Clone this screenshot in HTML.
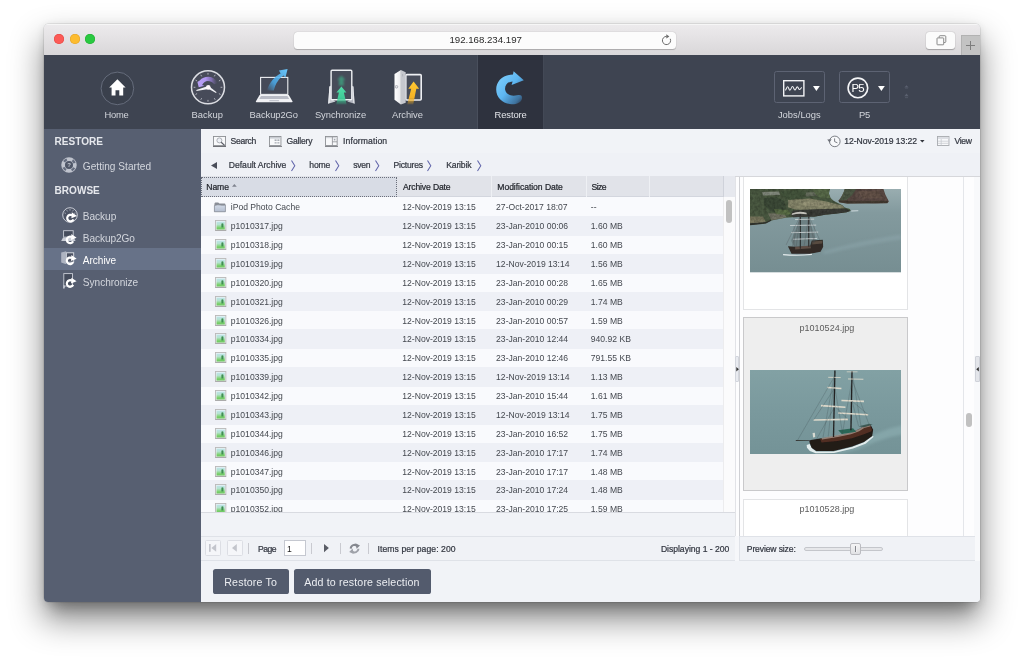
<!DOCTYPE html>
<html lang="en">
<head>
<meta charset="utf-8">
<title>P5 - Restore</title>
<style>
html,body{margin:0;padding:0;}
body{width:1024px;height:665px;overflow:hidden;background:#fff;position:relative;font-family:"Liberation Sans",sans-serif;}
#win{position:absolute;left:44px;top:24.4px;width:936px;height:577.6px;overflow:hidden;border-radius:4.5px 4.5px 4px 4px;
  box-shadow:0 17px 32px 2px rgba(0,0,0,.42),0 16px 14px -8px rgba(0,0,0,.22),0 2px 8px rgba(0,0,0,.11),0 0 0 .5px rgba(0,0,0,.14);background:#f1f3f7;}
#pg{will-change:transform;position:absolute;left:-44px;top:-24.4px;width:1024px;height:665px;}
.t{position:absolute;white-space:nowrap;line-height:1;font-family:"Liberation Sans",sans-serif;}
svg{overflow:visible;}
.th{-webkit-text-stroke:.22px currentColor;}

</style>
</head>
<body>
<div id="win"><div id="pg">
<div style="position:absolute;left:44.00px;top:24.00px;width:936.00px;height:31.00px;background:linear-gradient(#edebed,#e4e2e4 45%,#d9d7d9);border-bottom:0;box-shadow:inset 0 1px 0 #f6f6f6;"></div><div style="position:absolute;left:54.10px;top:34.10px;width:10.00px;height:10.00px;border-radius:50%;background:#fc5b57;box-shadow:inset 0 0 0 .5px #e1443f;"></div><div style="position:absolute;left:69.80px;top:34.10px;width:10.00px;height:10.00px;border-radius:50%;background:#fdbc2f;box-shadow:inset 0 0 0 .5px #e0a028;"></div><div style="position:absolute;left:85.30px;top:34.10px;width:10.00px;height:10.00px;border-radius:50%;background:#29c941;box-shadow:inset 0 0 0 .5px #1fac2e;"></div><div style="position:absolute;left:293.50px;top:31.50px;width:382.30px;height:17.20px;border-radius:3.5px;background:#fcfcfc;box-shadow:0 .5px .8px rgba(0,0,0,.2),0 0 0 .5px rgba(0,0,0,.05);"></div><span class="t" style="left:449.40px;top:30px;font-size:9.7px;line-height:19px;color:#2a2a2a;letter-spacing:-0.015px;">192.168.234.197</span><svg style="position:absolute;left:661.10px;top:35.30px;" width="11" height="11" viewBox="0 0 11 11"><path d="M9.22 3.77A4.1 4.1 0 1 1 5.50 1.40" fill="none" stroke="#6b6b6b" stroke-width="1"/><path d="M5.30 -0.80L8.40 1.40L5.30 3.60Z" fill="#6b6b6b"/></svg><div style="position:absolute;left:925.90px;top:31.80px;width:29.30px;height:17.40px;border-radius:3px;background:#fbfbfb;box-shadow:0 .5px 1px rgba(0,0,0,.25),0 0 0 .5px rgba(0,0,0,.05);"></div><svg style="position:absolute;left:935.50px;top:35.00px;" width="11" height="11" viewBox="0 0 11 11"><path d="M3.2 2.6V1.6A.9.9 0 0 1 4.1.7H8.9A.9.9 0 0 1 9.8 1.6V6.6A.9.9 0 0 1 8.9 7.5H8" fill="none" stroke="#6e6e6e" stroke-width=".8"/><rect x="1" y="2.9" width="6.7" height="6.9" rx=".6" fill="#fbfbfb" stroke="#6e6e6e" stroke-width=".8"/></svg><div style="position:absolute;left:961.00px;top:35.30px;width:19.00px;height:19.70px;background:#c3c3c3;border-left:.5px solid #b2b2b2;border-top:.5px solid #b2b2b2;"></div><div style="position:absolute;left:966.30px;top:44.90px;width:9.00px;height:0.90px;background:#7d7d7d;"></div><div style="position:absolute;left:970.40px;top:40.80px;width:0.90px;height:9.00px;background:#7d7d7d;"></div><div style="position:absolute;left:44.00px;top:55.00px;width:936.00px;height:74.00px;background:#3e4451;"></div><div style="position:absolute;left:478.00px;top:55.00px;width:65.00px;height:74.00px;background:#2e323e;"></div><div style="position:absolute;left:477.20px;top:55.00px;width:0.80px;height:74.00px;background:#494f5c;"></div><div style="position:absolute;left:543.00px;top:55.00px;width:1.00px;height:74.00px;background:#434956;"></div><svg style="position:absolute;left:100.00px;top:70.50px;" width="35" height="35" viewBox="0 0 35 35"><circle cx="17.4" cy="17.4" r="16.3" fill="#3a404c" stroke="#6a7080" stroke-width=".9"/><path d="M17.4 8.2L25.6 16.4H23.2V24.6H19.3V19.2H15.5V24.6H11.6V16.4H9.2Z" fill="#fff"/></svg><span class="t" style="left:104.40px;top:105px;font-size:9.4px;line-height:19px;color:#d3d6dc;letter-spacing:-0.219px;">Home</span><span class="t" style="left:191.50px;top:105px;font-size:9.4px;line-height:19px;color:#d3d6dc;letter-spacing:0.024px;">Backup</span><span class="t" style="left:249.60px;top:105px;font-size:9.4px;line-height:19px;color:#d3d6dc;letter-spacing:-0.069px;">Backup2Go</span><span class="t" style="left:314.90px;top:105px;font-size:9.4px;line-height:19px;color:#d3d6dc;letter-spacing:-0.039px;">Synchronize</span><span class="t" style="left:392.00px;top:105px;font-size:9.4px;line-height:19px;color:#d3d6dc;letter-spacing:-0.049px;">Archive</span><span class="t" style="left:494.50px;top:105px;font-size:9.4px;line-height:19px;color:#e4e6ea;letter-spacing:-0.088px;">Restore</span><span class="t" style="left:777.90px;top:105px;font-size:9.4px;line-height:19px;color:#d3d6dc;letter-spacing:0.017px;">Jobs/Logs</span><span class="t" style="left:859.10px;top:105px;font-size:9.4px;line-height:19px;color:#d3d6dc;letter-spacing:-0.349px;">P5</span><svg style="position:absolute;left:189.50px;top:69.20px;" width="36.2" height="36.2" viewBox="0 0 36.2 36.2"><defs><linearGradient id="pur" x1="1" y1="0" x2="0" y2="0"><stop offset="0" stop-color="#6a5f8e" stop-opacity="0"/><stop offset=".3" stop-color="#8f78c6" stop-opacity=".8"/><stop offset=".6" stop-color="#b096f0"/><stop offset="1" stop-color="#b9a2f6"/></linearGradient></defs><circle cx="18.0" cy="18.3" r="16.5" fill="#474b59" stroke="#dcdee3" stroke-width="1.5"/><g stroke="#b9bcc5" stroke-width=".9"><line x1="18.00" y1="3.90" x2="18.00" y2="5.70"/><line x1="25.20" y1="5.83" x2="24.30" y2="7.39"/><line x1="30.47" y1="11.10" x2="28.91" y2="12.00"/><line x1="32.40" y1="18.30" x2="30.60" y2="18.30"/><line x1="30.47" y1="25.50" x2="28.91" y2="24.60"/><line x1="25.20" y1="30.77" x2="24.30" y2="29.21"/><line x1="18.00" y1="32.70" x2="18.00" y2="30.90"/><line x1="10.80" y1="30.77" x2="11.70" y2="29.21"/><line x1="5.53" y1="25.50" x2="7.09" y2="24.60"/><line x1="3.60" y1="18.30" x2="5.40" y2="18.30"/><line x1="5.53" y1="11.10" x2="7.09" y2="12.00"/><line x1="10.80" y1="5.83" x2="11.70" y2="7.39"/></g><path d="M27.6 14Q24 7.5 18.4 7.7Q13 7.8 9.7 11.4L7.4 13L8.75 18.3L14.4 16.7L12.1 16Q14.5 12.2 17.7 12Q21.5 12 24.3 15.3Z" fill="url(#pur)"/><path d="M18.2 17.1L6.3 21.1L6.5 22L18.6 19.9Z" fill="#f2f3f6"/><path d="M17.4 19.2L26 24L26.6 23.2L19 17.2Z" fill="#f2f3f6"/><circle cx="18.3" cy="18.4" r="2.3" fill="#fdf6fa"/></svg><svg style="position:absolute;left:255.00px;top:66.00px;" width="40" height="40" viewBox="0 0 40 40"><defs><linearGradient id="blu" x1="0" y1="1" x2="1" y2="0"><stop offset="0" stop-color="#4aa9e8" stop-opacity="0"/><stop offset=".35" stop-color="#4aa9e8" stop-opacity=".85"/><stop offset="1" stop-color="#6cc7fb"/></linearGradient></defs><rect x="5.6" y="11.4" width="27.2" height="17" fill="#454a58" stroke="#eef0f3" stroke-width="1.1"/><path d="M4.6 28.9H33.8L37.6 35.4Q37.7 36.2 36.8 36.2H1.6Q.7 36.2 .8 35.4Z" fill="#f1f2f5"/><path d="M6 30H32.4L34.2 33H4.2Z" fill="#b9bcc6"/><path d="M14.6 34H23.8L24.2 35.3H14.2Z" fill="#c4c7cf"/><path d="M11.8 24.6C14.6 16 19.6 10.8 25.6 7.6L24 4.6L32.6 3L30.4 11.8L28.6 9.4C24 12.4 20.6 17 18.8 24.6Z" fill="url(#blu)"/></svg><svg style="position:absolute;left:326.00px;top:67.00px;" width="32" height="40" viewBox="0 0 32 40"><defs><linearGradient id="grn" x1="0" y1="0" x2="0" y2="1"><stop offset="0" stop-color="#52dba8"/><stop offset=".65" stop-color="#3ecb96"/><stop offset="1" stop-color="#3cc792" stop-opacity=".15"/></linearGradient><filter id="gb" x="-40%" y="-40%" width="180%" height="180%"><feGaussianBlur stdDeviation=".9"/></filter></defs><path d="M2.2 36.8L3.4 19.6L5.2 18.6V31.8L9.6 34.4Z" fill="#c9ccd3"/><path d="M2.2 36.8L3.4 19.6L4.2 19.2L3.6 35.8Z" fill="#eceef1"/><path d="M28.6 36.8L27.4 19.6L25.6 18.6V31.8L21.2 34.4Z" fill="#b4b7c0"/><path d="M28.6 36.8L27.4 19.6L26.6 19.2L27.2 35.8Z" fill="#e3e5e9"/><rect x="5.1" y="3.2" width="20.7" height="29.6" rx="1" fill="#474c59" stroke="#eef0f3" stroke-width="1.4"/><path d="M15.4 8.4L19.4 13H17.4L18 18.6H12.8L13.4 13H11.4Z" fill="#3cc792" opacity=".55" filter="url(#gb)"/><path d="M15.4 19.6L20.4 25.4H17.9L20.6 37.4H10.2L12.9 25.4H10.4Z" fill="url(#grn)"/></svg><svg style="position:absolute;left:390.00px;top:67.00px;" width="36" height="40" viewBox="0 0 36 40"><defs><linearGradient id="yel" x1="0" y1="0" x2="0" y2="1"><stop offset="0" stop-color="#ffc832"/><stop offset=".7" stop-color="#f6b224"/><stop offset="1" stop-color="#f5b021" stop-opacity=".12"/></linearGradient><linearGradient id="door" x1="0" y1="0" x2="1" y2="0"><stop offset="0" stop-color="#ffffff"/><stop offset="1" stop-color="#e9eaec"/></linearGradient></defs><rect x="15.8" y="7.6" width="15.4" height="25.4" rx="1" fill="#484d5a" stroke="#eef0f3" stroke-width="1.6"/><path d="M4.5 7.1L10.9 3V37.4L4.5 32.7Z" fill="url(#door)"/><path d="M10.9 3L15.7 5.3V35.8L10.9 37.4Z" fill="#c6c8ce"/><path d="M12.6 7V9.4" stroke="#a9acb4" stroke-width=".8"/><circle cx="6.5" cy="19.8" r="1.3" fill="#e9eaec" stroke="#9fa2ab" stroke-width=".8"/><path d="M23.6 14.4L29.2 21.8H26.3L23.2 37.6H17.2L21.2 21.8H18.3Z" fill="url(#yel)"/></svg><svg style="position:absolute;left:492.00px;top:68.00px;" width="36" height="40" viewBox="0 0 36 40"><defs><linearGradient id="rst" x1="0" y1="0" x2="1" y2="1"><stop offset="0" stop-color="#86d3fd"/><stop offset=".5" stop-color="#5db6f1"/><stop offset=".82" stop-color="#4b9fe0" stop-opacity=".6"/><stop offset="1" stop-color="#3f8fd0" stop-opacity="0"/></linearGradient></defs><path d="M21.6 3.2L31.8 12.2L19.6 17L20.6 13.4C15.2 13.6 12.4 18 13.2 22C14.2 26.6 19.4 28.6 25 27.2C29.4 26.2 30.2 28 30 30.4C29.6 34.4 24.4 36.4 19.6 36.2C10.8 35.8 4.2 29.6 4.2 21.4C4.2 13.4 10.6 6.6 21 6.6Z" fill="url(#rst)"/></svg><div style="position:absolute;left:774.10px;top:71.30px;width:50.60px;height:32.20px;border:.9px solid #5d6373;border-radius:2.5px;box-sizing:border-box;"></div><svg style="position:absolute;left:783.20px;top:79.60px;" width="21.6" height="16.6" viewBox="0 0 21.6 16.6"><rect x=".7" y=".7" width="20.2" height="15.2" fill="none" stroke="#f2f3f5" stroke-width="1.4"/><path d="M2.2 10.2C3.2 10 3.6 6.8 4.6 6.8C5.7 6.8 5.8 10.2 6.9 10.2C8 10.2 8.4 6.6 9.5 6.6C10.6 6.6 10.8 10 11.9 10C13 10 13.2 6.9 14.3 6.9C15.4 6.9 15.5 9.6 16.5 9.6C17.4 9.6 17.8 7.8 18.9 7.6" fill="none" stroke="#f2f3f5" stroke-width="1.05"/></svg><svg style="position:absolute;left:812.60px;top:85.70px;" width="6.8" height="5" viewBox="0 0 6.8 5"><path d="M0 0H6.8L3.4 5Z" fill="#fff"/></svg><div style="position:absolute;left:839.20px;top:71.30px;width:50.60px;height:32.20px;border:.9px solid #5d6373;border-radius:2.5px;box-sizing:border-box;"></div><svg style="position:absolute;left:847.40px;top:77.00px;" width="22" height="22" viewBox="0 0 22 22"><circle cx="10.9" cy="10.9" r="9.8" fill="none" stroke="#f4f5f7" stroke-width="1.6"/><text x="10.6" y="14.9" font-family="Liberation Sans, sans-serif" font-size="11.4" fill="#fff" text-anchor="middle" letter-spacing="-.9">P5</text></svg><svg style="position:absolute;left:877.80px;top:85.70px;" width="6.8" height="5" viewBox="0 0 6.8 5"><path d="M0 0H6.8L3.4 5Z" fill="#fff"/></svg><svg style="position:absolute;left:904.40px;top:84.60px;" width="5" height="14" viewBox="0 0 5 14"><path d="M.4 2.6H4.6L2.5 .2Z" fill="#5b6170"/><path d="M.4 11.2H4.6L2.5 8.6Z" fill="#5b6170"/><rect x="1" y="12.4" width="3" height=".7" fill="#5b6170"/><rect x="1" y="3.4" width="3" height=".5" fill="#535968"/></svg><div style="position:absolute;left:44.00px;top:129.00px;width:157.00px;height:473.00px;background:#575f71;"></div><div style="position:absolute;left:44.00px;top:248.20px;width:157.00px;height:21.90px;background:#677288;"></div><span class="t" style="left:54.60px;top:132px;font-size:10.05px;line-height:19px;color:#e6e8ed;letter-spacing:0.014px;font-weight:bold;">RESTORE</span><span class="t" style="left:54.60px;top:181px;font-size:10.05px;line-height:19px;color:#e6e8ed;font-weight:bold;">BROWSE</span><span class="t" style="left:82.80px;top:157px;font-size:10.1px;line-height:19px;color:#d3d6dd;letter-spacing:0.024px;">Getting Started</span><span class="t" style="left:82.80px;top:207px;font-size:10.1px;line-height:19px;color:#d3d6dd;letter-spacing:-0.031px;">Backup</span><span class="t" style="left:82.80px;top:229px;font-size:10.1px;line-height:19px;color:#d3d6dd;letter-spacing:-0.087px;">Backup2Go</span><span class="t" style="left:82.80px;top:251px;font-size:10.1px;line-height:19px;color:#ffffff;letter-spacing:-0.040px;">Archive</span><span class="t" style="left:82.80px;top:273px;font-size:10.1px;line-height:19px;color:#d3d6dd;letter-spacing:-0.016px;">Synchronize</span><svg style="position:absolute;left:60.00px;top:156.30px;" width="18" height="18" viewBox="0 0 18 18"><circle cx="9" cy="9" r="5.9" fill="none" stroke="#bfc3cd" stroke-width="3.7"/><circle cx="9" cy="9" r="5.9" fill="none" stroke="#646c7e" stroke-width="2.3" stroke-dasharray="3.4 5.87" stroke-dashoffset="-2.93"/><circle cx="9" cy="9" r="3.5" fill="#4f5667"/><text x="9" y="11.2" font-family="Liberation Sans, sans-serif" font-size="6" font-weight="bold" fill="#c3c7d0" text-anchor="middle">?</text></svg><svg style="position:absolute;left:61.60px;top:206.50px;" width="18" height="18" viewBox="0 0 18 18"><circle cx="8" cy="8" r="7.3" fill="#4c5364" stroke="#c9cdd6" stroke-width="1"/><g stroke="#c9cdd6" stroke-width=".7"><line x1="2.50" y1="5.86" x2="3.90" y2="6.41"/><line x1="4.67" y1="3.13" x2="5.52" y2="4.37"/><line x1="8.00" y1="2.10" x2="8.00" y2="3.60"/><line x1="11.33" y1="3.13" x2="10.48" y2="4.37"/><line x1="13.50" y1="5.86" x2="12.10" y2="6.41"/></g><g transform="translate(8.299999999999999,11.0) scale(.93)"><path d="M2 -2.9A3.5 3.5 0 1 0 3.4 1.5" fill="none" stroke="#fff" stroke-width="2.4" stroke-linecap="butt"/><path d="M1.6 -6.2L7.2 -2.2L1.2 0.2Z" fill="#fff"/></g></svg><svg style="position:absolute;left:60.00px;top:229.00px;" width="19" height="18" viewBox="0 0 19 18"><rect x="3.6" y="1.7" width="9.6" height="6.4" fill="#454c5c" stroke="#c9cdd6" stroke-width=".9"/><path d="M3 8.6H13.8L15.6 12H1.2Z" fill="#c9cdd6"/><g transform="translate(9.899999999999999,10.799999999999999) scale(.93)"><path d="M2 -2.9A3.5 3.5 0 1 0 3.4 1.5" fill="none" stroke="#fff" stroke-width="2.4" stroke-linecap="butt"/><path d="M1.6 -6.2L7.2 -2.2L1.2 0.2Z" fill="#fff"/></g></svg><svg style="position:absolute;left:60.00px;top:250.00px;" width="19" height="18" viewBox="0 0 19 18"><rect x="6.4" y="2.8" width="7.3" height="9.4" fill="#4a5162" stroke="#dfe2e8" stroke-width=".9"/><path d="M1.2 2.6L5.4 1.4Q6.3 1.2 6.3 2.1V13.4Q6.3 14.3 5.4 14L1.2 12.6Z" fill="#aeb4c1"/><g transform="translate(9.899999999999999,10.7) scale(.93)"><path d="M2 -2.9A3.5 3.5 0 1 0 3.4 1.5" fill="none" stroke="#fff" stroke-width="2.4" stroke-linecap="butt"/><path d="M1.6 -6.2L7.2 -2.2L1.2 0.2Z" fill="#fff"/></g></svg><svg style="position:absolute;left:60.00px;top:272.00px;" width="19" height="18" viewBox="0 0 19 18"><rect x="3.8" y="1.6" width="8.7" height="12.4" fill="#454c5c" stroke="#c9cdd6" stroke-width=".9"/><path d="M3.4 13L3 16.6H4.6L5 14Z" fill="#c9cdd6"/><g transform="translate(9.899999999999999,11.4) scale(.93)"><path d="M2 -2.9A3.5 3.5 0 1 0 3.4 1.5" fill="none" stroke="#fff" stroke-width="2.4" stroke-linecap="butt"/><path d="M1.6 -6.2L7.2 -2.2L1.2 0.2Z" fill="#fff"/></g></svg><div style="position:absolute;left:201.00px;top:129.00px;width:779.00px;height:24.90px;background:#f1f3f7;border-bottom:.8px solid #e6e8ee;box-sizing:border-box;"></div><div style="position:absolute;left:201.00px;top:153.40px;width:779.00px;height:23.10px;background:#eff1f6;"></div><svg style="position:absolute;left:212.90px;top:136.20px;" width="13" height="10" viewBox="0 0 13 10"><rect x=".45" y=".45" width="12.1" height="9.1" fill="#f8f9fb" stroke="#8d8f94" stroke-width=".9"/><circle cx="6.4" cy="4.4" r="2.5" fill="#eef1f6" stroke="#9b9ea6" stroke-width=".8"/><path d="M8.2 6.2L11.6 9.4" stroke="#5a5d66" stroke-width="1.2"/></svg><div style="position:absolute;left:212.90px;top:145.90px;width:13.00px;height:0.70px;background:#6f7177;"></div><span class="t th" style="left:230.60px;top:132px;font-size:8.6px;line-height:18px;color:#333741;letter-spacing:-0.325px;">Search</span><svg style="position:absolute;left:269.30px;top:136.20px;" width="12.4" height="10" viewBox="0 0 12.4 10"><rect x=".45" y=".45" width="11.5" height="9.1" fill="#f8f9fb" stroke="#8d8f94" stroke-width=".9"/><rect x="1" y="1" width="10.4" height="1.6" fill="#c9ccd2"/><rect x="5.6" y="3.4" width="2" height="1.6" fill="#a9adb5"/><rect x="8.4" y="3.4" width="2" height="1.6" fill="#a9adb5"/><rect x="5.6" y="6" width="2" height="1.6" fill="#b9bcc3"/><rect x="8.4" y="6" width="2" height="1.6" fill="#b9bcc3"/></svg><div style="position:absolute;left:269.30px;top:145.90px;width:12.40px;height:0.70px;background:#85878d;"></div><span class="t th" style="left:286.40px;top:132px;font-size:8.6px;line-height:18px;color:#333741;letter-spacing:-0.191px;">Gallery</span><svg style="position:absolute;left:325.30px;top:136.20px;" width="12.6" height="10" viewBox="0 0 12.6 10"><rect x=".45" y=".45" width="11.7" height="9.1" fill="#f8f9fb" stroke="#8d8f94" stroke-width=".9"/><rect x="1" y="1" width="10.6" height="1.2" fill="#d4d6db"/><path d="M7.4 1V9.4M7.4 5.8H12" stroke="#8d8f94" stroke-width=".8" fill="none"/><rect x="8.8" y="2.8" width="1.6" height="1.6" fill="#a3a7b0"/></svg><div style="position:absolute;left:325.30px;top:145.90px;width:12.60px;height:0.70px;background:#85878d;"></div><span class="t th" style="left:343.00px;top:132px;font-size:8.6px;line-height:18px;color:#333741;letter-spacing:0.107px;">Information</span><svg style="position:absolute;left:826.50px;top:134.60px;" width="14" height="13" viewBox="0 0 14 13"><circle cx="7.8" cy="6.4" r="5.3" fill="#f8f9fb" stroke="#6d7078" stroke-width=".9"/><path d="M7.6 3.4V6.6L10.4 7.8" fill="none" stroke="#6d7078" stroke-width=".9"/><path d="M.2 4.6L4.6 4.2L2.6 7.6Z" fill="#6d7078"/></svg><span class="t th" style="left:844.30px;top:132px;font-size:8.6px;line-height:18px;color:#333741;letter-spacing:-0.049px;">12-Nov-2019 13:22</span><svg style="position:absolute;left:920.40px;top:139.90px;" width="4.6" height="2.6" viewBox="0 0 4.6 2.6"><path d="M0 0H4.6L2.3 2.6Z" fill="#33363d"/></svg><svg style="position:absolute;left:936.70px;top:136.30px;" width="12.4" height="10" viewBox="0 0 12.4 10"><rect x=".45" y=".45" width="11.5" height="9.1" fill="#f8f9fb" stroke="#a7a9ae" stroke-width=".9"/><rect x="1" y="1" width="10.4" height="2" fill="#dcdee3"/><path d="M4.2 3V9.4M1 5.2H11.4M1 7.3H11.4" stroke="#c3c6cc" stroke-width=".7" fill="none"/></svg><span class="t th" style="left:954.40px;top:132px;font-size:8.6px;line-height:18px;color:#333741;letter-spacing:-0.296px;">View</span><svg style="position:absolute;left:210.70px;top:162.30px;" width="6" height="7" viewBox="0 0 6 7"><path d="M6 0V7L0 3.5Z" fill="#4a4e5a"/></svg><span class="t th" style="left:228.80px;top:156px;font-size:8.6px;line-height:18px;color:#333741;letter-spacing:-0.016px;">Default Archive</span><svg style="position:absolute;left:291.30px;top:159.60px;" width="4.4" height="11.4" viewBox="0 0 4.4 11.4"><path d="M.5 .4L3.8 5.7L.5 11" fill="none" stroke="#6165aa" stroke-width="1.05"/></svg><span class="t th" style="left:309.30px;top:156px;font-size:8.6px;line-height:18px;color:#333741;letter-spacing:-0.178px;">home</span><svg style="position:absolute;left:334.80px;top:159.60px;" width="4.4" height="11.4" viewBox="0 0 4.4 11.4"><path d="M.5 .4L3.8 5.7L.5 11" fill="none" stroke="#6165aa" stroke-width="1.05"/></svg><span class="t th" style="left:353.20px;top:156px;font-size:8.6px;line-height:18px;color:#333741;letter-spacing:-0.241px;">sven</span><svg style="position:absolute;left:375.00px;top:159.60px;" width="4.4" height="11.4" viewBox="0 0 4.4 11.4"><path d="M.5 .4L3.8 5.7L.5 11" fill="none" stroke="#6165aa" stroke-width="1.05"/></svg><span class="t th" style="left:393.60px;top:156px;font-size:8.6px;line-height:18px;color:#333741;letter-spacing:-0.233px;">Pictures</span><svg style="position:absolute;left:427.40px;top:159.60px;" width="4.4" height="11.4" viewBox="0 0 4.4 11.4"><path d="M.5 .4L3.8 5.7L.5 11" fill="none" stroke="#6165aa" stroke-width="1.05"/></svg><span class="t th" style="left:446.30px;top:156px;font-size:8.6px;line-height:18px;color:#333741;letter-spacing:-0.184px;">Karibik</span><svg style="position:absolute;left:476.60px;top:159.60px;" width="4.4" height="11.4" viewBox="0 0 4.4 11.4"><path d="M.5 .4L3.8 5.7L.5 11" fill="none" stroke="#6165aa" stroke-width="1.05"/></svg><svg width="0" height="0" style="position:absolute;left:0;top:0"><defs><linearGradient id="fld" x1="0" y1="0" x2="0" y2="1"><stop offset="0" stop-color="#d3dbe8"/><stop offset="1" stop-color="#b3bdcf"/></linearGradient><linearGradient id="pic" x1="0" y1="0" x2="0" y2="1"><stop offset="0" stop-color="#bfe3ee"/><stop offset=".4" stop-color="#b4e2cf"/><stop offset=".75" stop-color="#7fd273"/><stop offset="1" stop-color="#68c45c"/></linearGradient></defs></svg><div style="position:absolute;left:201.00px;top:176.20px;width:534.00px;height:21.10px;background:#e1e3e9;border-bottom:.7px solid #d3d6de;box-sizing:border-box;"></div><div style="position:absolute;left:722.60px;top:176.20px;width:12.40px;height:21.10px;background:#e6e8ee;border-left:.7px solid #cfd2da;box-sizing:border-box;"></div><div style="position:absolute;left:201.00px;top:176.90px;width:196.20px;height:19.70px;background:#d8dce5;border:.9px dotted #6b6f7b;box-sizing:border-box;"></div><div style="position:absolute;left:490.70px;top:176.20px;width:0.70px;height:21.10px;background:#cdd0d8;"></div><div style="position:absolute;left:491.40px;top:176.20px;width:0.80px;height:21.10px;background:#eef0f4;"></div><div style="position:absolute;left:585.50px;top:176.20px;width:0.70px;height:21.10px;background:#cdd0d8;"></div><div style="position:absolute;left:586.20px;top:176.20px;width:0.80px;height:21.10px;background:#eef0f4;"></div><div style="position:absolute;left:648.70px;top:176.20px;width:0.70px;height:21.10px;background:#cdd0d8;"></div><div style="position:absolute;left:649.40px;top:176.20px;width:0.80px;height:21.10px;background:#eef0f4;"></div><span class="t th" style="left:206.30px;top:178px;font-size:8.6px;line-height:18px;color:#22252c;letter-spacing:-0.085px;">Name</span><svg style="position:absolute;left:231.90px;top:184.00px;" width="4.8" height="2.7" viewBox="0 0 4.8 2.7"><path d="M0 2.7H4.8L2.4 0Z" fill="#7f838e"/></svg><span class="t th" style="left:403.00px;top:178px;font-size:8.6px;line-height:18px;color:#22252c;letter-spacing:-0.144px;">Archive Date</span><span class="t th" style="left:497.30px;top:178px;font-size:8.6px;line-height:18px;color:#22252c;letter-spacing:-0.050px;">Modification Date</span><span class="t th" style="left:591.50px;top:178px;font-size:8.6px;line-height:18px;color:#22252c;letter-spacing:-0.532px;">Size</span><div style="position:absolute;left:201.00px;top:197.00px;width:534.00px;height:315.50px;overflow:hidden;border-bottom:.8px solid #d9dce3;box-sizing:border-box;"><div style="position:absolute;left:0.00px;top:0.00px;width:534.00px;height:316.00px;background:#f9fafd;"></div><svg style="position:absolute;left:13.00px;top:4.90px;" width="11.8" height="10.2" viewBox="0 0 11.8 10.2"><path d="M.4 2.2Q.4 .5 1.4 .5H4.2L5.4 1.6H10.6Q11.4 1.6 11.4 2.4V9.8H.4Z" fill="#8a8e97"/><path d="M.4 3.6Q4 2.4 6 3Q9 3.6 11.4 3V9.8H.4Z" fill="url(#fld)" stroke="#80848d" stroke-width=".6"/></svg><span class="t" style="left:29.80px;top:1px;font-size:8.58px;line-height:18px;color:#44484f;">iPod Photo Cache</span><span class="t" style="left:201.30px;top:1px;font-size:8.58px;line-height:18px;color:#44484f;">12-Nov-2019 13:15</span><span class="t" style="left:295.10px;top:1px;font-size:8.58px;line-height:18px;color:#44484f;">27-Oct-2017 18:07</span><span class="t" style="left:389.80px;top:1px;font-size:8.58px;line-height:18px;color:#44484f;">--</span><div style="position:absolute;left:0.00px;top:19.07px;width:522.00px;height:19.77px;background:#eef0f6;"></div><svg style="position:absolute;left:13.50px;top:23.18px;" width="11.3" height="11" viewBox="0 0 11.3 11"><rect x=".45" y=".45" width="10.4" height="10.1" fill="#f1f1f1" stroke="#b9b9b9" stroke-width=".9"/><rect x=".2" y="9.9" width="10.9" height="1" fill="#a9a9a9"/><rect x="1.5" y="1.3" width="8.3" height="8.2" fill="url(#pic)"/><path d="M6.4 7.6V3.8Q7.4 2.6 8.4 3.8V7.6Z" fill="#3f8f52"/><rect x="1.5" y="1.3" width="8.3" height=".7" fill="#e9f5f6" opacity=".8"/></svg><span class="t" style="left:29.80px;top:20px;font-size:8.58px;line-height:18px;color:#44484f;">p1010317.jpg</span><span class="t" style="left:201.30px;top:20px;font-size:8.58px;line-height:18px;color:#44484f;">12-Nov-2019 13:15</span><span class="t" style="left:295.10px;top:20px;font-size:8.58px;line-height:18px;color:#44484f;">23-Jan-2010 00:06</span><span class="t" style="left:389.80px;top:20px;font-size:8.58px;line-height:18px;color:#44484f;">1.60 MB</span><svg style="position:absolute;left:13.50px;top:42.05px;" width="11.3" height="11" viewBox="0 0 11.3 11"><rect x=".45" y=".45" width="10.4" height="10.1" fill="#f1f1f1" stroke="#b9b9b9" stroke-width=".9"/><rect x=".2" y="9.9" width="10.9" height="1" fill="#a9a9a9"/><rect x="1.5" y="1.3" width="8.3" height="8.2" fill="url(#pic)"/><path d="M6.4 7.6V3.8Q7.4 2.6 8.4 3.8V7.6Z" fill="#3f8f52"/><rect x="1.5" y="1.3" width="8.3" height=".7" fill="#e9f5f6" opacity=".8"/></svg><span class="t" style="left:29.80px;top:39px;font-size:8.58px;line-height:18px;color:#44484f;">p1010318.jpg</span><span class="t" style="left:201.30px;top:39px;font-size:8.58px;line-height:18px;color:#44484f;">12-Nov-2019 13:15</span><span class="t" style="left:295.10px;top:39px;font-size:8.58px;line-height:18px;color:#44484f;">23-Jan-2010 00:15</span><span class="t" style="left:389.80px;top:39px;font-size:8.58px;line-height:18px;color:#44484f;">1.60 MB</span><div style="position:absolute;left:0.00px;top:56.83px;width:522.00px;height:19.77px;background:#eef0f6;"></div><svg style="position:absolute;left:13.50px;top:60.92px;" width="11.3" height="11" viewBox="0 0 11.3 11"><rect x=".45" y=".45" width="10.4" height="10.1" fill="#f1f1f1" stroke="#b9b9b9" stroke-width=".9"/><rect x=".2" y="9.9" width="10.9" height="1" fill="#a9a9a9"/><rect x="1.5" y="1.3" width="8.3" height="8.2" fill="url(#pic)"/><path d="M6.4 7.6V3.8Q7.4 2.6 8.4 3.8V7.6Z" fill="#3f8f52"/><rect x="1.5" y="1.3" width="8.3" height=".7" fill="#e9f5f6" opacity=".8"/></svg><span class="t" style="left:29.80px;top:58px;font-size:8.58px;line-height:18px;color:#44484f;">p1010319.jpg</span><span class="t" style="left:201.30px;top:58px;font-size:8.58px;line-height:18px;color:#44484f;">12-Nov-2019 13:15</span><span class="t" style="left:295.10px;top:58px;font-size:8.58px;line-height:18px;color:#44484f;">12-Nov-2019 13:14</span><span class="t" style="left:389.80px;top:58px;font-size:8.58px;line-height:18px;color:#44484f;">1.56 MB</span><svg style="position:absolute;left:13.50px;top:79.80px;" width="11.3" height="11" viewBox="0 0 11.3 11"><rect x=".45" y=".45" width="10.4" height="10.1" fill="#f1f1f1" stroke="#b9b9b9" stroke-width=".9"/><rect x=".2" y="9.9" width="10.9" height="1" fill="#a9a9a9"/><rect x="1.5" y="1.3" width="8.3" height="8.2" fill="url(#pic)"/><path d="M6.4 7.6V3.8Q7.4 2.6 8.4 3.8V7.6Z" fill="#3f8f52"/><rect x="1.5" y="1.3" width="8.3" height=".7" fill="#e9f5f6" opacity=".8"/></svg><span class="t" style="left:29.80px;top:77px;font-size:8.58px;line-height:18px;color:#44484f;">p1010320.jpg</span><span class="t" style="left:201.30px;top:77px;font-size:8.58px;line-height:18px;color:#44484f;">12-Nov-2019 13:15</span><span class="t" style="left:295.10px;top:77px;font-size:8.58px;line-height:18px;color:#44484f;">23-Jan-2010 00:28</span><span class="t" style="left:389.80px;top:77px;font-size:8.58px;line-height:18px;color:#44484f;">1.65 MB</span><div style="position:absolute;left:0.00px;top:94.58px;width:522.00px;height:19.77px;background:#eef0f6;"></div><svg style="position:absolute;left:13.50px;top:98.67px;" width="11.3" height="11" viewBox="0 0 11.3 11"><rect x=".45" y=".45" width="10.4" height="10.1" fill="#f1f1f1" stroke="#b9b9b9" stroke-width=".9"/><rect x=".2" y="9.9" width="10.9" height="1" fill="#a9a9a9"/><rect x="1.5" y="1.3" width="8.3" height="8.2" fill="url(#pic)"/><path d="M6.4 7.6V3.8Q7.4 2.6 8.4 3.8V7.6Z" fill="#3f8f52"/><rect x="1.5" y="1.3" width="8.3" height=".7" fill="#e9f5f6" opacity=".8"/></svg><span class="t" style="left:29.80px;top:96px;font-size:8.58px;line-height:18px;color:#44484f;">p1010321.jpg</span><span class="t" style="left:201.30px;top:96px;font-size:8.58px;line-height:18px;color:#44484f;">12-Nov-2019 13:15</span><span class="t" style="left:295.10px;top:96px;font-size:8.58px;line-height:18px;color:#44484f;">23-Jan-2010 00:29</span><span class="t" style="left:389.80px;top:96px;font-size:8.58px;line-height:18px;color:#44484f;">1.74 MB</span><svg style="position:absolute;left:13.50px;top:117.55px;" width="11.3" height="11" viewBox="0 0 11.3 11"><rect x=".45" y=".45" width="10.4" height="10.1" fill="#f1f1f1" stroke="#b9b9b9" stroke-width=".9"/><rect x=".2" y="9.9" width="10.9" height="1" fill="#a9a9a9"/><rect x="1.5" y="1.3" width="8.3" height="8.2" fill="url(#pic)"/><path d="M6.4 7.6V3.8Q7.4 2.6 8.4 3.8V7.6Z" fill="#3f8f52"/><rect x="1.5" y="1.3" width="8.3" height=".7" fill="#e9f5f6" opacity=".8"/></svg><span class="t" style="left:29.80px;top:115px;font-size:8.58px;line-height:18px;color:#44484f;">p1010326.jpg</span><span class="t" style="left:201.30px;top:115px;font-size:8.58px;line-height:18px;color:#44484f;">12-Nov-2019 13:15</span><span class="t" style="left:295.10px;top:115px;font-size:8.58px;line-height:18px;color:#44484f;">23-Jan-2010 00:57</span><span class="t" style="left:389.80px;top:115px;font-size:8.58px;line-height:18px;color:#44484f;">1.59 MB</span><div style="position:absolute;left:0.00px;top:132.32px;width:522.00px;height:19.77px;background:#eef0f6;"></div><svg style="position:absolute;left:13.50px;top:136.43px;" width="11.3" height="11" viewBox="0 0 11.3 11"><rect x=".45" y=".45" width="10.4" height="10.1" fill="#f1f1f1" stroke="#b9b9b9" stroke-width=".9"/><rect x=".2" y="9.9" width="10.9" height="1" fill="#a9a9a9"/><rect x="1.5" y="1.3" width="8.3" height="8.2" fill="url(#pic)"/><path d="M6.4 7.6V3.8Q7.4 2.6 8.4 3.8V7.6Z" fill="#3f8f52"/><rect x="1.5" y="1.3" width="8.3" height=".7" fill="#e9f5f6" opacity=".8"/></svg><span class="t" style="left:29.80px;top:133px;font-size:8.58px;line-height:18px;color:#44484f;">p1010334.jpg</span><span class="t" style="left:201.30px;top:133px;font-size:8.58px;line-height:18px;color:#44484f;">12-Nov-2019 13:15</span><span class="t" style="left:295.10px;top:133px;font-size:8.58px;line-height:18px;color:#44484f;">23-Jan-2010 12:44</span><span class="t" style="left:389.80px;top:133px;font-size:8.58px;line-height:18px;color:#44484f;">940.92 KB</span><svg style="position:absolute;left:13.50px;top:155.30px;" width="11.3" height="11" viewBox="0 0 11.3 11"><rect x=".45" y=".45" width="10.4" height="10.1" fill="#f1f1f1" stroke="#b9b9b9" stroke-width=".9"/><rect x=".2" y="9.9" width="10.9" height="1" fill="#a9a9a9"/><rect x="1.5" y="1.3" width="8.3" height="8.2" fill="url(#pic)"/><path d="M6.4 7.6V3.8Q7.4 2.6 8.4 3.8V7.6Z" fill="#3f8f52"/><rect x="1.5" y="1.3" width="8.3" height=".7" fill="#e9f5f6" opacity=".8"/></svg><span class="t" style="left:29.80px;top:152px;font-size:8.58px;line-height:18px;color:#44484f;">p1010335.jpg</span><span class="t" style="left:201.30px;top:152px;font-size:8.58px;line-height:18px;color:#44484f;">12-Nov-2019 13:15</span><span class="t" style="left:295.10px;top:152px;font-size:8.58px;line-height:18px;color:#44484f;">23-Jan-2010 12:46</span><span class="t" style="left:389.80px;top:152px;font-size:8.58px;line-height:18px;color:#44484f;">791.55 KB</span><div style="position:absolute;left:0.00px;top:170.07px;width:522.00px;height:19.77px;background:#eef0f6;"></div><svg style="position:absolute;left:13.50px;top:174.18px;" width="11.3" height="11" viewBox="0 0 11.3 11"><rect x=".45" y=".45" width="10.4" height="10.1" fill="#f1f1f1" stroke="#b9b9b9" stroke-width=".9"/><rect x=".2" y="9.9" width="10.9" height="1" fill="#a9a9a9"/><rect x="1.5" y="1.3" width="8.3" height="8.2" fill="url(#pic)"/><path d="M6.4 7.6V3.8Q7.4 2.6 8.4 3.8V7.6Z" fill="#3f8f52"/><rect x="1.5" y="1.3" width="8.3" height=".7" fill="#e9f5f6" opacity=".8"/></svg><span class="t" style="left:29.80px;top:171px;font-size:8.58px;line-height:18px;color:#44484f;">p1010339.jpg</span><span class="t" style="left:201.30px;top:171px;font-size:8.58px;line-height:18px;color:#44484f;">12-Nov-2019 13:15</span><span class="t" style="left:295.10px;top:171px;font-size:8.58px;line-height:18px;color:#44484f;">12-Nov-2019 13:14</span><span class="t" style="left:389.80px;top:171px;font-size:8.58px;line-height:18px;color:#44484f;">1.13 MB</span><svg style="position:absolute;left:13.50px;top:193.05px;" width="11.3" height="11" viewBox="0 0 11.3 11"><rect x=".45" y=".45" width="10.4" height="10.1" fill="#f1f1f1" stroke="#b9b9b9" stroke-width=".9"/><rect x=".2" y="9.9" width="10.9" height="1" fill="#a9a9a9"/><rect x="1.5" y="1.3" width="8.3" height="8.2" fill="url(#pic)"/><path d="M6.4 7.6V3.8Q7.4 2.6 8.4 3.8V7.6Z" fill="#3f8f52"/><rect x="1.5" y="1.3" width="8.3" height=".7" fill="#e9f5f6" opacity=".8"/></svg><span class="t" style="left:29.80px;top:190px;font-size:8.58px;line-height:18px;color:#44484f;">p1010342.jpg</span><span class="t" style="left:201.30px;top:190px;font-size:8.58px;line-height:18px;color:#44484f;">12-Nov-2019 13:15</span><span class="t" style="left:295.10px;top:190px;font-size:8.58px;line-height:18px;color:#44484f;">23-Jan-2010 15:44</span><span class="t" style="left:389.80px;top:190px;font-size:8.58px;line-height:18px;color:#44484f;">1.61 MB</span><div style="position:absolute;left:0.00px;top:207.82px;width:522.00px;height:19.77px;background:#eef0f6;"></div><svg style="position:absolute;left:13.50px;top:211.93px;" width="11.3" height="11" viewBox="0 0 11.3 11"><rect x=".45" y=".45" width="10.4" height="10.1" fill="#f1f1f1" stroke="#b9b9b9" stroke-width=".9"/><rect x=".2" y="9.9" width="10.9" height="1" fill="#a9a9a9"/><rect x="1.5" y="1.3" width="8.3" height="8.2" fill="url(#pic)"/><path d="M6.4 7.6V3.8Q7.4 2.6 8.4 3.8V7.6Z" fill="#3f8f52"/><rect x="1.5" y="1.3" width="8.3" height=".7" fill="#e9f5f6" opacity=".8"/></svg><span class="t" style="left:29.80px;top:209px;font-size:8.58px;line-height:18px;color:#44484f;">p1010343.jpg</span><span class="t" style="left:201.30px;top:209px;font-size:8.58px;line-height:18px;color:#44484f;">12-Nov-2019 13:15</span><span class="t" style="left:295.10px;top:209px;font-size:8.58px;line-height:18px;color:#44484f;">12-Nov-2019 13:14</span><span class="t" style="left:389.80px;top:209px;font-size:8.58px;line-height:18px;color:#44484f;">1.75 MB</span><svg style="position:absolute;left:13.50px;top:230.80px;" width="11.3" height="11" viewBox="0 0 11.3 11"><rect x=".45" y=".45" width="10.4" height="10.1" fill="#f1f1f1" stroke="#b9b9b9" stroke-width=".9"/><rect x=".2" y="9.9" width="10.9" height="1" fill="#a9a9a9"/><rect x="1.5" y="1.3" width="8.3" height="8.2" fill="url(#pic)"/><path d="M6.4 7.6V3.8Q7.4 2.6 8.4 3.8V7.6Z" fill="#3f8f52"/><rect x="1.5" y="1.3" width="8.3" height=".7" fill="#e9f5f6" opacity=".8"/></svg><span class="t" style="left:29.80px;top:228px;font-size:8.58px;line-height:18px;color:#44484f;">p1010344.jpg</span><span class="t" style="left:201.30px;top:228px;font-size:8.58px;line-height:18px;color:#44484f;">12-Nov-2019 13:15</span><span class="t" style="left:295.10px;top:228px;font-size:8.58px;line-height:18px;color:#44484f;">23-Jan-2010 16:52</span><span class="t" style="left:389.80px;top:228px;font-size:8.58px;line-height:18px;color:#44484f;">1.75 MB</span><div style="position:absolute;left:0.00px;top:245.57px;width:522.00px;height:19.77px;background:#eef0f6;"></div><svg style="position:absolute;left:13.50px;top:249.68px;" width="11.3" height="11" viewBox="0 0 11.3 11"><rect x=".45" y=".45" width="10.4" height="10.1" fill="#f1f1f1" stroke="#b9b9b9" stroke-width=".9"/><rect x=".2" y="9.9" width="10.9" height="1" fill="#a9a9a9"/><rect x="1.5" y="1.3" width="8.3" height="8.2" fill="url(#pic)"/><path d="M6.4 7.6V3.8Q7.4 2.6 8.4 3.8V7.6Z" fill="#3f8f52"/><rect x="1.5" y="1.3" width="8.3" height=".7" fill="#e9f5f6" opacity=".8"/></svg><span class="t" style="left:29.80px;top:247px;font-size:8.58px;line-height:18px;color:#44484f;">p1010346.jpg</span><span class="t" style="left:201.30px;top:247px;font-size:8.58px;line-height:18px;color:#44484f;">12-Nov-2019 13:15</span><span class="t" style="left:295.10px;top:247px;font-size:8.58px;line-height:18px;color:#44484f;">23-Jan-2010 17:17</span><span class="t" style="left:389.80px;top:247px;font-size:8.58px;line-height:18px;color:#44484f;">1.74 MB</span><svg style="position:absolute;left:13.50px;top:268.55px;" width="11.3" height="11" viewBox="0 0 11.3 11"><rect x=".45" y=".45" width="10.4" height="10.1" fill="#f1f1f1" stroke="#b9b9b9" stroke-width=".9"/><rect x=".2" y="9.9" width="10.9" height="1" fill="#a9a9a9"/><rect x="1.5" y="1.3" width="8.3" height="8.2" fill="url(#pic)"/><path d="M6.4 7.6V3.8Q7.4 2.6 8.4 3.8V7.6Z" fill="#3f8f52"/><rect x="1.5" y="1.3" width="8.3" height=".7" fill="#e9f5f6" opacity=".8"/></svg><span class="t" style="left:29.80px;top:266px;font-size:8.58px;line-height:18px;color:#44484f;">p1010347.jpg</span><span class="t" style="left:201.30px;top:266px;font-size:8.58px;line-height:18px;color:#44484f;">12-Nov-2019 13:15</span><span class="t" style="left:295.10px;top:266px;font-size:8.58px;line-height:18px;color:#44484f;">23-Jan-2010 17:17</span><span class="t" style="left:389.80px;top:266px;font-size:8.58px;line-height:18px;color:#44484f;">1.48 MB</span><div style="position:absolute;left:0.00px;top:283.32px;width:522.00px;height:19.77px;background:#eef0f6;"></div><svg style="position:absolute;left:13.50px;top:287.43px;" width="11.3" height="11" viewBox="0 0 11.3 11"><rect x=".45" y=".45" width="10.4" height="10.1" fill="#f1f1f1" stroke="#b9b9b9" stroke-width=".9"/><rect x=".2" y="9.9" width="10.9" height="1" fill="#a9a9a9"/><rect x="1.5" y="1.3" width="8.3" height="8.2" fill="url(#pic)"/><path d="M6.4 7.6V3.8Q7.4 2.6 8.4 3.8V7.6Z" fill="#3f8f52"/><rect x="1.5" y="1.3" width="8.3" height=".7" fill="#e9f5f6" opacity=".8"/></svg><span class="t" style="left:29.80px;top:284px;font-size:8.58px;line-height:18px;color:#44484f;">p1010350.jpg</span><span class="t" style="left:201.30px;top:284px;font-size:8.58px;line-height:18px;color:#44484f;">12-Nov-2019 13:15</span><span class="t" style="left:295.10px;top:284px;font-size:8.58px;line-height:18px;color:#44484f;">23-Jan-2010 17:24</span><span class="t" style="left:389.80px;top:284px;font-size:8.58px;line-height:18px;color:#44484f;">1.48 MB</span><svg style="position:absolute;left:13.50px;top:306.30px;" width="11.3" height="11" viewBox="0 0 11.3 11"><rect x=".45" y=".45" width="10.4" height="10.1" fill="#f1f1f1" stroke="#b9b9b9" stroke-width=".9"/><rect x=".2" y="9.9" width="10.9" height="1" fill="#a9a9a9"/><rect x="1.5" y="1.3" width="8.3" height="8.2" fill="url(#pic)"/><path d="M6.4 7.6V3.8Q7.4 2.6 8.4 3.8V7.6Z" fill="#3f8f52"/><rect x="1.5" y="1.3" width="8.3" height=".7" fill="#e9f5f6" opacity=".8"/></svg><span class="t" style="left:29.80px;top:303px;font-size:8.58px;line-height:18px;color:#44484f;">p1010352.jpg</span><span class="t" style="left:201.30px;top:303px;font-size:8.58px;line-height:18px;color:#44484f;">12-Nov-2019 13:15</span><span class="t" style="left:295.10px;top:303px;font-size:8.58px;line-height:18px;color:#44484f;">23-Jan-2010 17:25</span><span class="t" style="left:389.80px;top:303px;font-size:8.58px;line-height:18px;color:#44484f;">1.59 MB</span><div style="position:absolute;left:522.00px;top:0.00px;width:12.00px;height:315.00px;background:#fbfbfc;border-left:.6px solid #ececee;box-sizing:border-box;"></div><div style="position:absolute;left:525.10px;top:3.00px;width:5.90px;height:22.90px;background:#c1c1c1;border-radius:3px;"></div></div><div style="position:absolute;left:735.00px;top:176.50px;width:245.00px;height:359.50px;background:#fdfdfe;"></div><div style="position:absolute;left:734.50px;top:176.50px;width:0.70px;height:359.50px;background:#e2e3e7;"></div><div style="position:absolute;left:739.30px;top:176.50px;width:0.80px;height:359.50px;background:#cfd0d4;"></div><div style="position:absolute;left:962.80px;top:176.50px;width:0.70px;height:359.50px;background:#e4e6ea;"></div><div style="position:absolute;left:973.60px;top:176.50px;width:0.70px;height:359.50px;background:#e4e6ea;"></div><div style="position:absolute;left:974.30px;top:176.50px;width:5.70px;height:359.50px;background:#f8f9fb;"></div><div style="position:absolute;left:735.00px;top:176.20px;width:245.00px;height:0.80px;background:#d6d7db;"></div><div style="position:absolute;left:739.00px;top:176.50px;width:224.00px;height:359.30px;overflow:hidden;"><div style="position:absolute;left:4.30px;top:-26.50px;width:164.90px;height:159.90px;background:#fff;border:.8px solid #e3e4e6;box-sizing:border-box;"></div><svg preserveAspectRatio="none" style="position:absolute;left:11.40px;top:12.50px;" width="151" height="83.6" viewBox="0 0 150.6 83.8"><defs><linearGradient id="w1" x1="0" y1="0" x2="0" y2="1"><stop offset="0" stop-color="#99adb0"/><stop offset=".28" stop-color="#839a9e"/><stop offset="1" stop-color="#768e92"/></linearGradient><filter id="b1" x="-10%" y="-10%" width="120%" height="120%"><feGaussianBlur stdDeviation=".75"/></filter><filter id="b2" x="-10%" y="-30%" width="120%" height="160%"><feGaussianBlur stdDeviation="1.6"/></filter><filter id="b3" x="-20%" y="-20%" width="140%" height="140%"><feGaussianBlur stdDeviation=".35"/></filter><filter id="nz" x="0" y="0" width="100%" height="100%"><feTurbulence type="fractalNoise" baseFrequency=".35" numOctaves="2" seed="7" result="n"/><feColorMatrix in="n" type="matrix" values="0 0 0 0 0  0 0 0 0 0  0 0 0 0 0  .9 .9 .9 0 -1.05"/><feComposite in2="SourceGraphic" operator="in"/></filter><clipPath id="c1"><rect x="0" y="0" width="150.6" height="83.8"/></clipPath><clipPath id="ci"><polygon points="0,0 79.8,0 78.7,4.6 80.4,8.9 83.6,12.1 92.2,16.4 94.3,18.5 99.7,20.1 100.4,21.9 96.5,23.2 85.7,24.6 75,25.7 64.2,27.5 58,27.5 41.7,28.2 35.2,28.9 21.3,31.6 15.9,34.3 8,35.2 0,36"/><polygon points="94.4,0 133.1,0 134.8,5.3 138.5,12.6 137.1,14.1 123.4,14.4 111.1,13.9 97,14 89.1,13.2 88.2,11.8 91.2,7.6 93.6,3"/></clipPath></defs><g clip-path="url(#c1)"><rect width="150.6" height="83.8" fill="url(#w1)"/><path d="M72 62.5C95 56 120 50 151 45.5V50.5C120 54.5 98 60 74 65.5Z" fill="#93acb2" opacity=".42" filter="url(#b2)"/><path d="M101 21.4L108 21V22.4L101 22.8Z" fill="#c9d6d9" opacity=".8" filter="url(#b3)"/><g filter="url(#b1)"><polygon points="0,0 79.8,0 78.7,4.6 80.4,8.9 83.6,12.1 92.2,16.4 94.3,18.5 99.7,20.1 100.4,21.9 96.5,23.2 85.7,24.6 75,25.7 64.2,27.5 58,27.5 41.7,28.2 35.2,28.9 21.3,31.6 15.9,34.3 8,35.2 0,36" fill="#4c5a42"/><path d="M38 11L60 9.4L76 12.6L92 16.6L94.4 19.6L75 20.2L58 21L45 20.6L38 18.4Z" fill="#88886c"/><path d="M52 13L72 13.4L82 16.4L70 17.6L54 16.6Z" fill="#9a977a" opacity=".8"/><path d="M43 21.6L58 20.6L75 20L94.6 19.6L100.4 21.9L96.5 23.4L85.7 24.8L75 25.9L64.2 27.7L58 27.7L43 28.4L41 25Z" fill="#3b3d37"/><path d="M12 3L29 2.4L30 6L13 6.6Z" fill="#8d9387" opacity=".85"/><path d="M55 3.4L68 3L69 6.6L56 7.4Z" fill="#767b6d" opacity=".7"/><path d="M14 9L26 8L34 12L36 20L30 24L20 22L14 16Z" fill="#3c4c37"/><path d="M30 2L52 .4L56 4L52 9L40 10.6L32 8Z" fill="#45573c"/><path d="M62 .4L79 0L78.6 5L80 9L72 9.6L66 6Z" fill="#586a49"/><path d="M0 27.6L13 27.6L16 33.8L8 35.2L0 36Z" fill="#7b7a60"/><path d="M18 24.6L34 24L36.4 28.6L21.4 31.4Z" fill="#7c7b6c" opacity=".85"/><path d="M24 20L38 21L41 25L36 26L26 25Z" fill="#5d7148" opacity=".9"/><path d="M0 34.4L8 33.8L16 33L21 30.6L21.3 31.8L15.9 34.6L8 35.6L0 36.4Z" fill="#33362f"/><polygon points="94.4,0 133.1,0 134.8,5.3 138.5,12.6 137.1,14.1 123.4,14.4 111.1,13.9 97,14 89.1,13.2 88.2,11.8 91.2,7.6 93.6,3" fill="#5b4c45"/><path d="M94.6 0L106 0L102 6L96 11L88.6 12.4L91.6 7.6Z" fill="#4c5a45" opacity=".9"/><path d="M108 2L128 1.6L132 9L112 10Z" fill="#6a564d" opacity=".7"/><path d="M88.4 11.6L110 12.2L137.6 12.2L137.1 14.3L97 14.8L89 13.4Z" fill="#453b32"/></g><g clip-path="url(#ci)"><rect x="0" y="0" width="140" height="37" fill="#1f261c" filter="url(#nz)" opacity=".3"/></g><path d="M41.6 26.4Q48.6 22 56.4 25L56.4 27.4H41.6Z" fill="#3a3b38" filter="url(#b3)"/><path d="M41.8 24.6Q48.8 21.6 56.4 23.8L56.6 25.4Q49 23.8 41.6 26Z" fill="#c3c1bb" filter="url(#b3)"/><g filter="url(#b3)"><path d="M37.8 57.4L46 58L60 56.8L61.6 51.6L72.6 50.8L73 58L70.4 62.8L60 64.8L41.4 65Z" fill="#302a26"/><path d="M45 57.8L60 56.6L61 59.4L45 60.6Z" fill="#6e5b50" opacity=".75"/><path d="M62 52.6L72 52V54.6L62 55.6Z" fill="#6a5a4c" opacity=".7"/><path d="M50.2 28L58.6 28L66 52L60 57L44 58L41 52Z" fill="#3a3f40" opacity=".28"/><g stroke="#2b2a2a" stroke-width="1.1"><line x1="50.2" y1="25" x2="50.2" y2="60"/><line x1="58.6" y1="25" x2="58.6" y2="58"/></g><g stroke="#d3d9da" stroke-width=".9" opacity=".9"><line x1="40" y1="36.6" x2="66" y2="36.2"/><line x1="41" y1="43.8" x2="68" y2="43.2"/><line x1="43" y1="50.4" x2="67" y2="49.6"/><line x1="45" y1="30.6" x2="64" y2="30.2"/></g><g stroke="#4a4d4f" stroke-width=".4" opacity=".7"><line x1="50.2" y1="27" x2="42" y2="58"/><line x1="50.2" y1="27" x2="46" y2="58"/><line x1="58.6" y1="27" x2="54" y2="57"/><line x1="58.6" y1="27" x2="64" y2="54"/><line x1="58.6" y1="27" x2="70" y2="52"/><line x1="50.2" y1="27" x2="36" y2="56"/><line x1="44" y1="37" x2="44" y2="58"/><line x1="64" y1="37" x2="64" y2="54"/></g><path d="M33 65.2Q48 66.6 62 65L61.6 66.2Q46 67.6 33 66.4Z" fill="#e4ebed"/></g></g></svg><div style="position:absolute;left:4.30px;top:140.70px;width:164.90px;height:174.20px;background:#eeeeee;border:.8px solid #c9c9cb;box-sizing:border-box;"></div><span class="t" style="left:60.45px;top:142px;font-size:9.0px;line-height:18px;color:#5c5c5c;letter-spacing:0.029px;">p1010524.jpg</span><svg preserveAspectRatio="none" style="position:absolute;left:11.40px;top:193.70px;" width="151" height="84" viewBox="0 0 150.8 83.5"><defs><linearGradient id="w2" x1="0" y1="0" x2="0" y2="1"><stop offset="0" stop-color="#82a1a4"/><stop offset=".5" stop-color="#7a999d"/><stop offset="1" stop-color="#749397"/></linearGradient><clipPath id="c2"><rect x="0" y="0" width="150.8" height="83.5"/></clipPath></defs><g clip-path="url(#c2)"><rect width="150.8" height="83.5" fill="url(#w2)"/><polygon points="113.8,71.9 124.4,63.9 140.2,58.0 153.5,54.7 153.5,63.9 140.2,66.6 124.4,71.9 108.5,78.5 92.6,82.5 83.4,82.5" fill="#93b5b8" opacity=".5" filter="url(#b2)"/><g filter="url(#b3)"><polygon points="56.6,74.5 59.5,73.5 62.2,78.0 66.2,81.1 83.4,81.1 101.9,76.6 113.8,71.9 122.4,65.5 123.6,66.3 115.4,73.2 102.9,78.0 83.9,82.5 65.6,82.7 59.8,80.6 56.9,77.2" fill="#e3eded"/><polygon points="45.7,69.6 59.5,70.0 60.9,69.6 72.8,67.6 87.3,65.0 100.5,62.4 108.5,59.0 113.8,55.7 120.4,54.4 123.0,59.3 122.0,65.5 113.8,71.5 101.9,76.1 83.4,80.6 66.2,80.6 61.5,77.4 59.5,72.1 59.3,70.7 45.8,70.4" fill="#221a17"/><polygon points="70.1,68.7 87.3,65.8 100.5,63.1 109.1,59.7 114.0,56.8 119.9,55.5 121.7,58.9 121.4,60.8 113.8,63.9 101.9,67.9 87.3,70.6 71.4,72.1" fill="#5e3325" opacity=".8"/><polygon points="71.4,67.6 87.3,64.7 100.5,62.1 108.5,58.9 113.8,55.7 120.1,54.4 120.7,56.0 114.0,57.6 109.0,60.8 100.8,63.9 87.6,66.6 72.0,69.2" fill="#b8a69c" opacity=".7"/><polygon points="88.1,60.0 102.9,57.9 106.1,61.3 91.6,63.5" fill="#2a6656"/><polygon points="108.5,56.0 119.1,53.4 122.4,54.4 113.8,56.8" fill="#2f4f48" opacity=".8"/><polygon points="62.5,62.6 64.8,62.4 65.1,66.6 63.0,67.1" fill="#e8e6dc" opacity=".85"/><g stroke="#232323" stroke-width="1.35"><line x1="84.8" y1="0.4" x2="83.4" y2="66.6"/><line x1="101.9" y1="1.0" x2="100.8" y2="60.0"/></g><line x1="78.1" y1="7.3" x2="90.6" y2="7.5" stroke="#ddd9cb" stroke-width="0.8"/><line x1="77.3" y1="17.4" x2="91.3" y2="18.4" stroke="#ddd9cb" stroke-width="1.7"/><line x1="70.9" y1="35.4" x2="95.3" y2="37.0" stroke="#ddd9cb" stroke-width="1.6"/><line x1="63.5" y1="49.7" x2="97.9" y2="49.1" stroke="#ddd9cb" stroke-width="1.6"/><line x1="96.6" y1="1.8" x2="107.4" y2="1.8" stroke="#ddd9cb" stroke-width="0.7"/><line x1="97.9" y1="8.9" x2="113.2" y2="9.2" stroke="#ddd9cb" stroke-width="0.9"/><line x1="91.3" y1="30.3" x2="113.8" y2="31.1" stroke="#ddd9cb" stroke-width="1.7"/><line x1="88.1" y1="42.8" x2="118.0" y2="44.4" stroke="#ddd9cb" stroke-width="1.5"/><line x1="84.8" y1="1.8" x2="72.8" y2="67.6" stroke="#39484a" stroke-width=".35" opacity=".7"/><line x1="84.8" y1="1.8" x2="78.1" y2="66.6" stroke="#39484a" stroke-width=".35" opacity=".7"/><line x1="84.8" y1="17.6" x2="92.6" y2="63.9" stroke="#39484a" stroke-width=".35" opacity=".7"/><line x1="101.9" y1="1.8" x2="111.1" y2="57.3" stroke="#39484a" stroke-width=".35" opacity=".7"/><line x1="101.9" y1="9.7" x2="119.1" y2="54.7" stroke="#39484a" stroke-width=".35" opacity=".7"/><line x1="101.9" y1="9.7" x2="92.6" y2="61.3" stroke="#39484a" stroke-width=".35" opacity=".7"/><line x1="84.8" y1="36.2" x2="66.2" y2="69.2" stroke="#39484a" stroke-width=".35" opacity=".7"/><line x1="84.8" y1="5.7" x2="47.6" y2="69.6" stroke="#39484a" stroke-width=".35" opacity=".7"/><line x1="101.9" y1="30.9" x2="108.5" y2="56.0" stroke="#39484a" stroke-width=".35" opacity=".7"/><line x1="84.8" y1="17.6" x2="63.5" y2="49.7" stroke="#39484a" stroke-width=".35" opacity=".7"/><line x1="84.8" y1="36.2" x2="97.9" y2="49.1" stroke="#39484a" stroke-width=".35" opacity=".7"/><line x1="101.9" y1="30.9" x2="118.0" y2="44.4" stroke="#39484a" stroke-width=".35" opacity=".7"/></g></g></svg><div style="position:absolute;left:4.30px;top:322.10px;width:164.90px;height:174.20px;background:#fff;border:.8px solid #e3e4e6;box-sizing:border-box;"></div><span class="t" style="left:60.45px;top:323px;font-size:9.0px;line-height:18px;color:#5c5c5c;letter-spacing:0.029px;">p1010528.jpg</span></div><div style="position:absolute;left:966.20px;top:413.30px;width:5.60px;height:13.60px;background:#c1c1c1;border-radius:3px;"></div><div style="position:absolute;left:735.00px;top:356.00px;width:4.40px;height:26.00px;background:#e9ebf0;border:.6px solid #d3d6dd;box-sizing:border-box;border-radius:1px;"></div><svg style="position:absolute;left:736.00px;top:366.70px;" width="3" height="4.6" viewBox="0 0 3 4.6"><path d="M.3 0L2.9 2.3L.3 4.6Z" fill="#333"/></svg><div style="position:absolute;left:975.00px;top:356.40px;width:5.00px;height:26.00px;background:#e3e5ea;border:.6px solid #cfd2d9;box-sizing:border-box;border-radius:1px;"></div><svg style="position:absolute;left:976.20px;top:367.10px;" width="3" height="4.6" viewBox="0 0 3 4.6"><path d="M2.8 0L.2 2.3L2.8 4.6Z" fill="#333"/></svg><div style="position:absolute;left:201.00px;top:512.00px;width:534.00px;height:24.20px;background:#f1f3f7;"></div><div style="position:absolute;left:201.00px;top:511.60px;width:534.00px;height:0.80px;background:#d9dbe1;"></div><div style="position:absolute;left:201.00px;top:536.00px;width:534.00px;height:24.60px;background:#f0f2f6;border-top:.8px solid #dfe2e8;border-bottom:.8px solid #dfe2e8;box-sizing:border-box;"></div><div style="position:absolute;left:735.00px;top:536.00px;width:4.40px;height:24.60px;background:#f6f7fa;"></div><div style="position:absolute;left:739.40px;top:536.00px;width:235.40px;height:24.60px;background:#f0f2f6;border-top:.8px solid #dfe2e8;border-bottom:.8px solid #dfe2e8;border-left:.7px solid #dfe2e8;box-sizing:border-box;"></div><div style="position:absolute;left:974.80px;top:536.00px;width:5.20px;height:24.60px;background:#f8f9fb;"></div><div style="position:absolute;left:201.00px;top:560.60px;width:779.00px;height:41.40px;background:#f1f3f7;"></div><div style="position:absolute;left:204.90px;top:540.20px;width:16.50px;height:16.30px;background:#f5f6f9;border:.8px solid #dcdee4;box-sizing:border-box;border-radius:1.5px;"></div><svg style="position:absolute;left:209.40px;top:544.40px;" width="7.4" height="7.8" viewBox="0 0 7.4 7.8"><rect x="0" y="0" width="1.7" height="7.8" fill="#c3c5cc"/><path d="M7.2 0V7.8L2.4 3.9Z" fill="#c3c5cc"/></svg><div style="position:absolute;left:226.70px;top:540.20px;width:16.70px;height:16.30px;background:#f5f6f9;border:.8px solid #dcdee4;box-sizing:border-box;border-radius:1.5px;"></div><svg style="position:absolute;left:232.40px;top:544.40px;" width="5" height="7.8" viewBox="0 0 5 7.8"><path d="M4.8 0V7.8L0 3.9Z" fill="#c3c5cc"/></svg><div style="position:absolute;left:247.90px;top:542.60px;width:0.80px;height:11.40px;background:#c9cad0;"></div><div style="position:absolute;left:311.20px;top:542.60px;width:0.80px;height:11.40px;background:#c9cad0;"></div><div style="position:absolute;left:339.70px;top:542.60px;width:0.80px;height:11.40px;background:#c9cad0;"></div><div style="position:absolute;left:368.00px;top:542.60px;width:0.80px;height:11.40px;background:#c9cad0;"></div><span class="t th" style="left:258.00px;top:540px;font-size:8.6px;line-height:18px;color:#333741;letter-spacing:-0.496px;">Page</span><div style="position:absolute;left:283.50px;top:540.20px;width:22.80px;height:16.30px;background:#fff;border:.8px solid #c5c8d0;box-sizing:border-box;"></div><span class="t" style="left:287.00px;top:540px;font-size:8.6px;line-height:18px;color:#222;">1</span><svg style="position:absolute;left:323.70px;top:543.90px;" width="4.9" height="8.2" viewBox="0 0 4.9 8.2"><path d="M0 0V8.2L4.9 4.1Z" fill="#5a5d66"/></svg><svg style="position:absolute;left:349.00px;top:542.80px;" width="11.2" height="11.3" viewBox="0 0 11.2 11.3"><path d="M1.7 5.6A3.9 3.9 0 0 1 8.3 3" fill="none" stroke="#85888f" stroke-width="2"/><path d="M6.4 .2L11 2.4L7.6 5.8Z" fill="#85888f"/><path d="M9.5 5.7A3.9 3.9 0 0 1 2.9 8.3" fill="none" stroke="#9fa2a9" stroke-width="2"/><path d="M4.8 11.1L.2 8.9L3.6 5.5Z" fill="#9fa2a9"/></svg><span class="t th" style="left:377.50px;top:540px;font-size:8.6px;line-height:18px;color:#333741;letter-spacing:0.095px;">Items per page: 200</span><span class="t th" style="left:660.90px;top:540px;font-size:8.6px;line-height:18px;color:#333741;letter-spacing:-0.024px;">Displaying 1 - 200</span><span class="t th" style="left:746.80px;top:540px;font-size:8.6px;line-height:18px;color:#333741;letter-spacing:-0.135px;">Preview size:</span><div style="position:absolute;left:804.40px;top:546.90px;width:78.90px;height:4.00px;background:#e6e7ea;border:.7px solid #c4c6cb;box-sizing:border-box;border-radius:2px;"></div><div style="position:absolute;left:849.60px;top:543.40px;width:11.10px;height:11.20px;background:linear-gradient(#f5f5f6,#e1e2e5);border:.8px solid #bbbcc1;box-sizing:border-box;border-radius:2px;"></div><div style="position:absolute;left:854.90px;top:546.00px;width:0.70px;height:6.00px;background:#85878d;"></div><div style="position:absolute;left:855.70px;top:546.00px;width:0.60px;height:6.00px;background:#f3f3f5;"></div><div style="position:absolute;left:213.20px;top:569.10px;width:75.60px;height:24.90px;background:#535b6d;border-radius:2.6px;"></div><span class="t" style="left:224.30px;top:572px;font-size:10.65px;line-height:20px;color:#eceef2;letter-spacing:0.139px;">Restore To</span><div style="position:absolute;left:293.70px;top:569.10px;width:137.20px;height:24.90px;background:#535b6d;border-radius:2.6px;"></div><span class="t" style="left:304.30px;top:572px;font-size:10.65px;line-height:20px;color:#eceef2;letter-spacing:0.146px;">Add to restore selection</span>
</div></div>
</body>
</html>
